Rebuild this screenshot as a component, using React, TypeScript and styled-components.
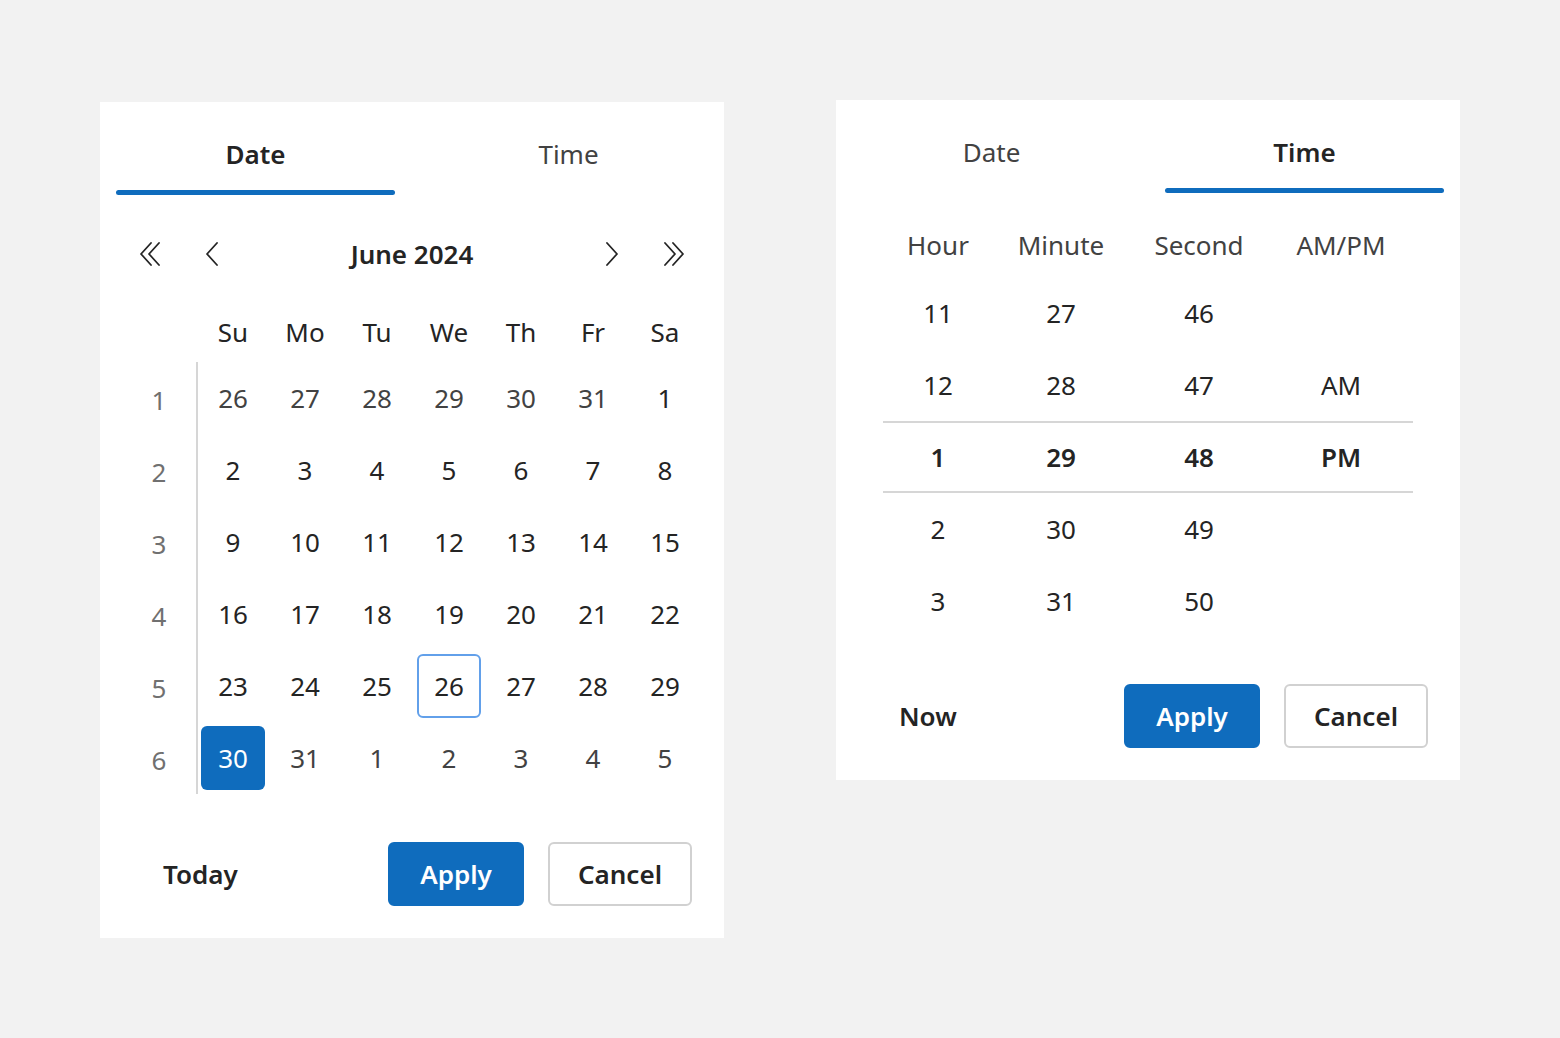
import React from 'react'
import styled, { createGlobalStyle, css } from 'styled-components'

const GlobalStyle = createGlobalStyle`
  html, body {
    margin: 0;
    padding: 0;
    background: #f2f2f2;
    font-family: "Noto Sans", "Open Sans", sans-serif;
    color: #242424;
  }
`

const Page = styled.div`
  display: flex;
  align-items: flex-start;
  gap: 112px;
  padding: 100px 0 0 100px;
  min-height: 938px;
`

const Card = styled.div<{ $offset?: number }>`
  width: 624px;
  background: #ffffff;
  display: flex;
  flex-direction: column;
  padding-bottom: 32px;
  margin-top: ${p => p.$offset ?? 0}px;
`

const TabBar = styled.div`
  display: grid;
  grid-template-columns: 1fr 1fr;
  column-gap: 34px;
  padding: 0 16px;
`

const Tab = styled.button<{ $active?: boolean }>`
  display: flex;
  flex-direction: column;
  align-items: center;
  background: none;
  border: none;
  padding: 34px 0 0;
  font-family: inherit;
  font-size: 26px;
  line-height: 36px;
  cursor: pointer;
  color: ${p => (p.$active ? '#242424' : '#424242')};
  font-weight: ${p => (p.$active ? 600 : 400)};

  &::after {
    content: '';
    display: block;
    align-self: stretch;
    height: 5px;
    margin-top: 18px;
    border-radius: 3px;
    background: ${p => (p.$active ? '#0f6cbd' : 'transparent')};
  }
`

const NavRow = styled.div`
  display: flex;
  align-items: center;
  gap: 13px;
  height: 48px;
  margin-top: 35px;
  padding: 0 28px;
`

const NavButton = styled.button`
  width: 48px;
  height: 48px;
  display: flex;
  align-items: center;
  justify-content: center;
  background: none;
  border: none;
  padding: 0;
  color: #242424;
  cursor: pointer;
`

const MonthTitle = styled.div`
  flex: 1;
  text-align: center;
  font-size: 26px;
  font-weight: 600;
`

const CalendarBody = styled.div`
  display: grid;
  grid-template-columns: 64px 1fr;
  margin-top: 28px;
  padding-left: 34px;
`

const HeaderRow = styled.div`
  grid-column: 2;
  display: grid;
  grid-template-columns: repeat(7, 64px);
  column-gap: 8px;
  padding-left: 3px;
  height: 52px;
  margin-bottom: 4px;
`

const HeaderCell = styled.div`
  display: flex;
  align-items: center;
  justify-content: center;
  font-size: 26px;
  color: #242424;
`

const WeekColumn = styled.div`
  display: grid;
  grid-template-rows: repeat(6, 64px);
  row-gap: 8px;
  padding: 4px 12px 4px 0;
  border-right: 2px solid #d6d6d6;
`

const WeekNumber = styled.div`
  display: flex;
  align-items: center;
  justify-content: center;
  font-size: 26px;
  color: #707070;
  padding-top: 4px;
`

const DaysGrid = styled.div`
  display: grid;
  grid-template-columns: repeat(7, 64px);
  grid-template-rows: repeat(6, 64px);
  gap: 8px;
  padding: 4px 0 4px 3px;
`

const DayCell = styled.button<{ $muted?: boolean; $selected?: boolean; $today?: boolean }>`
  display: flex;
  align-items: center;
  justify-content: center;
  width: 64px;
  height: 64px;
  padding: 0;
  border: 2px solid transparent;
  border-radius: 6px;
  background: none;
  font-family: inherit;
  font-size: 26px;
  color: ${p => (p.$muted ? '#424242' : '#242424')};
  cursor: pointer;

  ${p =>
    p.$today &&
    css`
      border-color: #62a0ea;
    `}

  ${p =>
    p.$selected &&
    css`
      background: #0f6cbd;
      color: #ffffff;
    `}
`

const Footer = styled.div<{ $top: number }>`
  display: flex;
  align-items: center;
  gap: 24px;
  padding: 0 32px;
  margin-top: ${p => p.$top}px;
`

const TextButton = styled.button`
  background: none;
  border: none;
  padding: 0 31px;
  height: 64px;
  margin-right: auto;
  font-family: inherit;
  font-size: 26px;
  font-weight: 600;
  color: #242424;
  cursor: pointer;
`

const ActionButton = styled.button<{ $primary?: boolean }>`
  height: 64px;
  padding: 0;
  border-radius: 6px;
  font-family: inherit;
  font-size: 26px;
  font-weight: 600;
  cursor: pointer;
  ${p =>
    p.$primary
      ? css`
          width: 136px;
          background: #0f6cbd;
          border: 2px solid #0f6cbd;
          color: #ffffff;
        `
      : css`
          width: 144px;
          background: #ffffff;
          border: 2px solid #d1d1d1;
          color: #242424;
        `}
`

const TimeGrid = styled.div`
  display: grid;
  grid-template-columns: 110px 136px 140px 144px;
  grid-template-rows: 68px;
  grid-auto-rows: 72px;
  margin: 16px 47px 0;
`

const TimeHeader = styled.div`
  display: flex;
  align-items: center;
  justify-content: center;
  padding-top: 4px;
  font-size: 26px;
  color: #424242;
`

const TimeCell = styled.div<{ $active?: boolean }>`
  display: flex;
  align-items: center;
  justify-content: center;
  font-size: 26px;
  color: #242424;
  font-weight: ${p => (p.$active ? 600 : 400)};
  ${p =>
    p.$active &&
    css`
      border-top: 2px solid #d6d6d6;
      border-bottom: 2px solid #d6d6d6;
    `}
`

const Chevron = ({ dir, double }: { dir: 'left' | 'right'; double?: boolean }) => {
  const flip = dir === 'right' ? 'scale(-1,1) translate(-28,0)' : undefined
  return (
    <svg width="28" height="28" viewBox="0 0 28 28" fill="none" stroke="currentColor" strokeWidth="1.8" strokeLinecap="round" strokeLinejoin="round">
      <g transform={flip}>
        {double ? (
          <>
            <path d="M13 3 L3 14 L13 25" />
            <path d="M21 3 L11 14 L21 25" />
          </>
        ) : (
          <path d="M18 3 L8 14 L18 25" />
        )}
      </g>
    </svg>
  )
}

const weekdays = ['Su', 'Mo', 'Tu', 'We', 'Th', 'Fr', 'Sa']

type Day = { n: number; muted?: boolean; selected?: boolean; today?: boolean }

const buildDays = (): Day[] => {
  const days: Day[] = []
  ;[26, 27, 28, 29, 30, 31].forEach(n => days.push({ n, muted: true }))
  for (let n = 1; n <= 29; n++) days.push({ n, today: n === 26 })
  days.push({ n: 30, selected: true })
  ;[31, 1, 2, 3, 4, 5].forEach(n => days.push({ n, muted: true }))
  return days
}

const DateCard = () => (
  <Card $offset={2}>
    <TabBar>
      <Tab $active>Date</Tab>
      <Tab>Time</Tab>
    </TabBar>
    <NavRow>
      <NavButton aria-label="Previous year"><Chevron dir="left" double /></NavButton>
      <NavButton aria-label="Previous month"><Chevron dir="left" /></NavButton>
      <MonthTitle>June 2024</MonthTitle>
      <NavButton aria-label="Next month"><Chevron dir="right" /></NavButton>
      <NavButton aria-label="Next year"><Chevron dir="right" double /></NavButton>
    </NavRow>
    <CalendarBody>
      <HeaderRow>
        {weekdays.map(d => (
          <HeaderCell key={d}>{d}</HeaderCell>
        ))}
      </HeaderRow>
      <WeekColumn>
        {[1, 2, 3, 4, 5, 6].map(w => (
          <WeekNumber key={w}>{w}</WeekNumber>
        ))}
      </WeekColumn>
      <DaysGrid>
        {buildDays().map((d, i) => (
          <DayCell key={i} $muted={d.muted} $selected={d.selected} $today={d.today}>
            {d.n}
          </DayCell>
        ))}
      </DaysGrid>
    </CalendarBody>
    <Footer $top={48}>
      <TextButton>Today</TextButton>
      <ActionButton $primary>Apply</ActionButton>
      <ActionButton>Cancel</ActionButton>
    </Footer>
  </Card>
)

const timeRows = [
  ['11', '27', '46', ''],
  ['12', '28', '47', 'AM'],
  ['1', '29', '48', 'PM'],
  ['2', '30', '49', ''],
  ['3', '31', '50', ''],
]

const TimeCard = () => (
  <Card>
    <TabBar>
      <Tab>Date</Tab>
      <Tab $active>Time</Tab>
    </TabBar>
    <TimeGrid>
      {['Hour', 'Minute', 'Second', 'AM/PM'].map(h => (
        <TimeHeader key={h}>{h}</TimeHeader>
      ))}
      {timeRows.map((row, r) =>
        row.map((v, c) => (
          <TimeCell key={`${r}-${c}`} $active={r === 2}>
            {v}
          </TimeCell>
        ))
      )}
    </TimeGrid>
    <Footer $top={47}>
      <TextButton>Now</TextButton>
      <ActionButton $primary>Apply</ActionButton>
      <ActionButton>Cancel</ActionButton>
    </Footer>
  </Card>
)

export default function App() {
  return (
    <>
      <GlobalStyle />
      <Page>
        <DateCard />
        <TimeCard />
      </Page>
    </>
  )
}
